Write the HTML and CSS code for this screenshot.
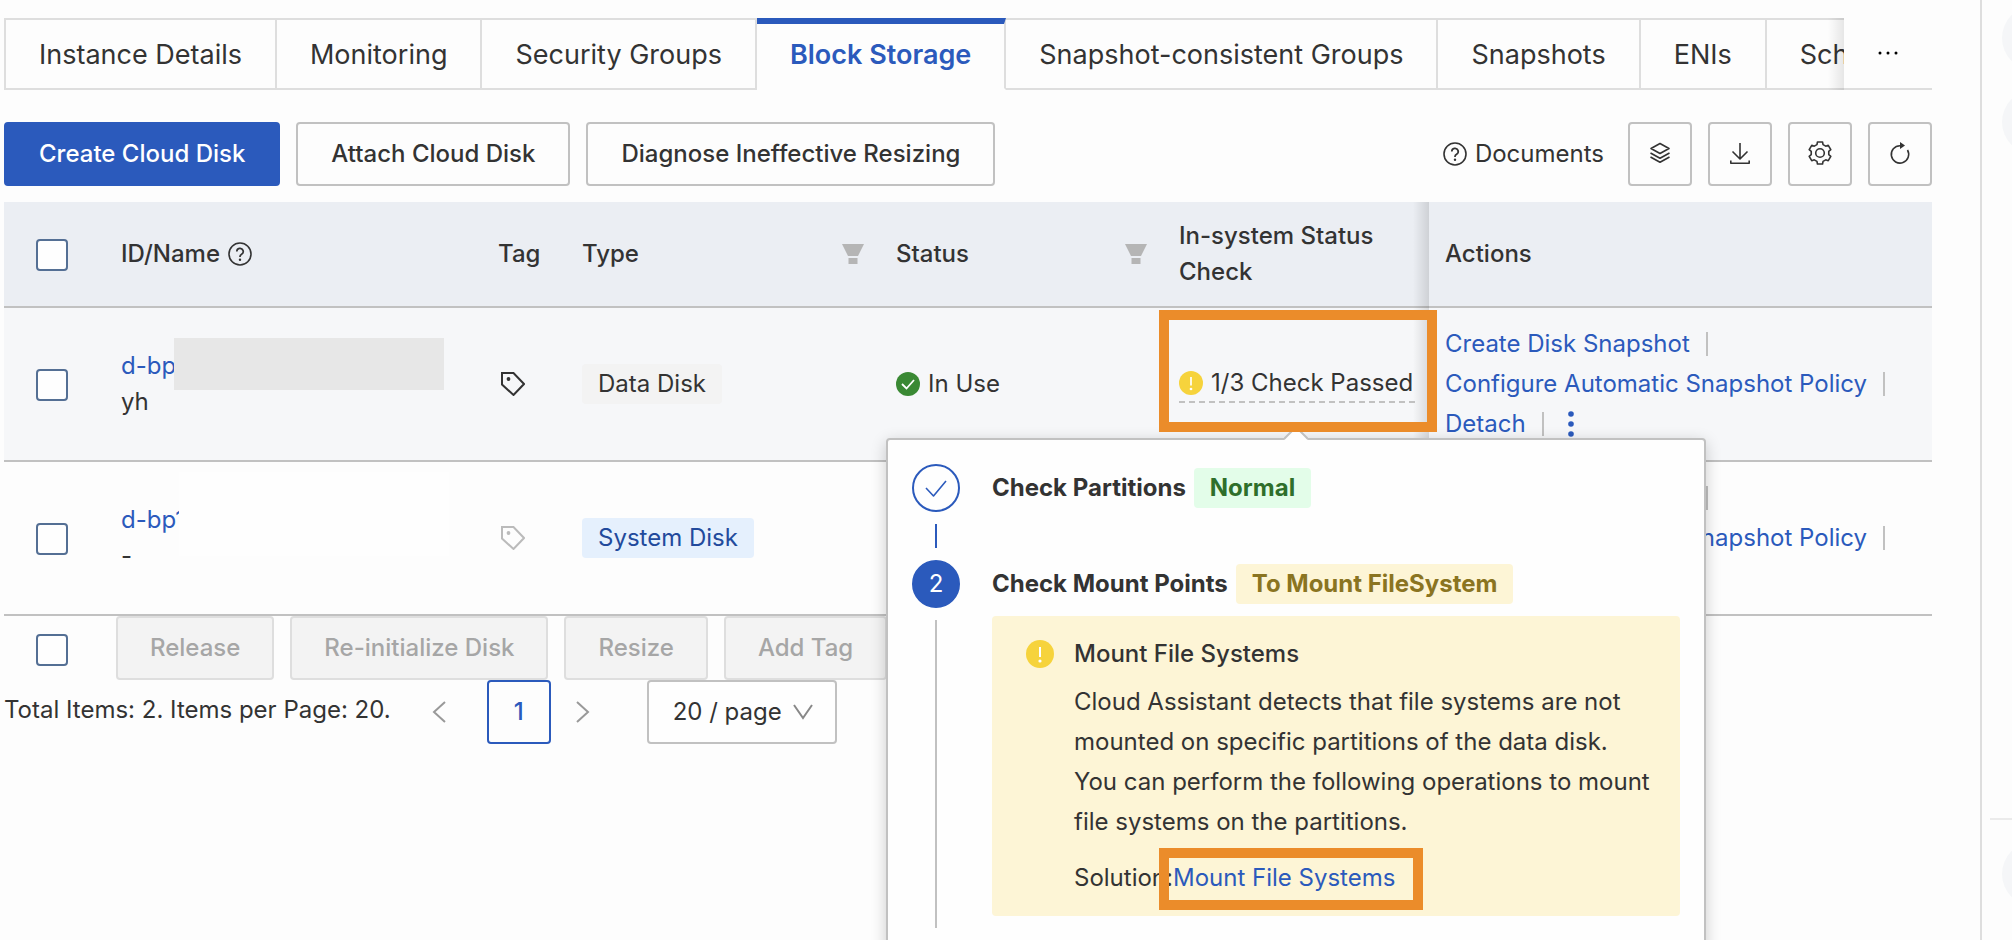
FILE: index.html
```html
<!DOCTYPE html>
<html lang="en">
<head>
<meta charset="utf-8">
<title>Block Storage</title>
<link rel="stylesheet" href="styles.css">
</head>
<body>
<svg class="sprite" aria-hidden="true">
  <symbol id="i-help" viewBox="0 0 24 24"><circle cx="12" cy="12" r="11" fill="none" stroke="currentColor" stroke-width="1.6"/><path d="M8.8 9.6a3.2 3.2 0 1 1 4.8 2.7c-1 .6-1.6 1.1-1.6 2.2v.5" fill="none" stroke="currentColor" stroke-width="1.7"/><circle cx="12" cy="17.8" r="1.2" fill="currentColor"/></symbol>
  <symbol id="i-tag" viewBox="0 0 24 24"><path d="M1 1h11.500L23 12 12.500 23 1 12.500z" fill="none" stroke="currentColor" stroke-width="2"/><circle cx="7.500" cy="7" r="1.900" fill="currentColor"/></symbol>
  <symbol id="i-funnel" viewBox="0 0 22 20"><path d="M0 0h22l-6 12H6z" fill="currentColor"/><path d="M6.500 14h9v6h-9z" fill="currentColor"/></symbol>
  <symbol id="i-warn" viewBox="0 0 28 28"><circle cx="14" cy="14" r="14" fill="#f6d33c"/><path d="M14 7v10" stroke="#fff" stroke-width="2"/><circle cx="14" cy="21" r="1.6" fill="#fff"/></symbol>
</svg>
<div class="page">
  <main class="content">
    <nav class="tabs">
      <div class="tab-list">
        <button class="tab">Instance Details</button>
        <button class="tab">Monitoring</button>
        <button class="tab">Security Groups</button>
        <button class="tab is-active">Block Storage</button>
        <button class="tab">Snapshot-consistent Groups</button>
        <button class="tab">Snapshots</button>
        <button class="tab">ENIs</button>
        <button class="tab">Sch</button>
      </div>
      <button class="tab-more" aria-label="More tabs"><svg width="20" height="4" viewBox="0 0 20 4"><circle cx="2" cy="2" r="1.5"/><circle cx="10" cy="2" r="1.5"/><circle cx="18" cy="2" r="1.5"/></svg></button>
    </nav>

    <div class="toolbar">
      <button class="btn btn-primary">Create Cloud Disk</button>
      <button class="btn">Attach Cloud Disk</button>
      <button class="btn">Diagnose Ineffective Resizing</button>
      <a class="docs" href="#"><svg class="ico"><use href="#i-help"/></svg>Documents</a>
      <button class="btn btn-icon" aria-label="Layers"><svg class="ico line thin" viewBox="0 0 24 24"><path d="M12 2.500l9 5-9 5-9-5z"/><path d="M2.500 12l9.500 5.300 9.500-5.300"/><path d="M2.500 16l9.500 5.300 9.500-5.300"/></svg></button>
      <button class="btn btn-icon" aria-label="Download"><svg class="ico line thin" viewBox="0 0 24 24"><path d="M12 2v15.500M4.500 10.500l7.500 7.500 7.500-7.500M2.800 19.500v2.700h18.400v-2.700"/></svg></button>
      <button class="btn btn-icon" aria-label="Settings"><svg class="ico line thin" viewBox="0 0 24 24"><path d="M9.460 1H14.540L15.040 3.640L17.720 5.180L20.260 4.290L22.810 8.700L20.760 10.450V13.550L22.810 15.300L20.260 19.710L17.720 18.820L15.040 20.360L14.540 23H9.460L8.960 20.360L6.280 18.820L3.740 19.710L1.190 15.300L3.240 13.550V10.450L1.190 8.700L3.740 4.290L6.280 5.180L8.960 3.640Z"/><circle cx="12" cy="12" r="4.300"/></svg></button>
      <button class="btn btn-icon" aria-label="Refresh"><svg class="ico line thin" viewBox="0 0 24 24"><path d="M19.500 9a8.700 8.700 0 1 1-7.500-4.300h1"/><path d="M12 1l5 3.500-5 3.500z" fill="currentColor" stroke="none"/></svg></button>
    </div>

    <table class="disks">
      <colgroup><col class="c-check"><col><col class="c-tag"><col class="c-type"><col class="c-status"><col class="c-check-status"><col class="c-actions"></colgroup>
      <thead>
        <tr>
          <th class="pick"><input type="checkbox" aria-label="Select all"></th>
          <th><span class="inline">ID/Name <svg class="ico"><use href="#i-help"/></svg></span></th>
          <th>Tag</th>
          <th><span class="filtered">Type <svg class="funnel"><use href="#i-funnel"/></svg></span></th>
          <th><span class="filtered">Status <svg class="funnel"><use href="#i-funnel"/></svg></span></th>
          <th>In-system Status Check</th>
          <th class="actions">Actions</th>
        </tr>
      </thead>
      <tbody>
        <tr class="is-hover">
          <td class="pick"><input type="checkbox" aria-label="Select disk yh"></td>
          <td><div class="disk-id"><a href="#">d-bp</a><span class="mask mask-grey"></span></div><div class="disk-name">yh</div></td>
          <td class="tag-cell"><svg class="ico"><use href="#i-tag"/></svg></td>
          <td><span class="badge">Data Disk</span></td>
          <td><span class="inline status"><svg class="ico" viewBox="0 0 24 24"><circle cx="12" cy="12" r="12" fill="#3a8934"/><path d="M6 12l4.500 4.500L18 8" fill="none" stroke="#fff" stroke-width="1.8"/></svg>In Use</span></td>
          <td>
            <div class="check-trigger">
              <span class="check-label"><svg class="ico"><use href="#i-warn"/></svg>1/3 Check Passed</span>
              <div class="popover">
                <svg class="arrow" viewBox="0 0 24 14"><path d="M0 14L12 1l12 13z" fill="#fefefe"/><path d="M0 13L12 1l12 12" fill="none" stroke="#c1c1c1" stroke-width="2"/></svg>
                <div class="step">
                  <div class="rail"><span class="node"><svg class="ico line thin" viewBox="0 0 24 24"><path d="M2 12l7.500 8L22 5"/></svg></span><span class="rail-line rail-done"></span></div>
                  <div class="step-title">Check Partitions <span class="badge ok">Normal</span></div>
                </div>
                <div class="step">
                  <div class="rail"><span class="node node-active">2</span><span class="rail-line"></span></div>
                  <div class="step-body">
                    <div class="step-title">Check Mount Points <span class="badge warn">To Mount FileSystem</span></div>
                    <div class="notice">
                      <svg class="notice-ico"><use href="#i-warn"/></svg>
                      <div>
                        <h3>Mount File Systems</h3>
                        <p>Cloud Assistant detects that file systems are not mounted on specific partitions of the data disk. You can perform the following operations to mount file systems on the partitions.</p>
                        <p class="solution">Solution:<a class="marked" href="#">Mount File Systems</a></p>
                      </div>
                    </div>
                  </div>
                </div>
              </div>
              <span class="highlight"></span>
            </div>
          </td>
          <td class="actions">
            <div><a href="#">Create Disk Snapshot</a><i class="sep"></i></div>
            <div><a href="#">Configure Automatic Snapshot Policy</a><i class="sep"></i></div>
            <div><a href="#">Detach</a><i class="sep"></i><button class="dots" aria-label="More actions"><svg width="6" height="26" viewBox="0 0 6 26"><circle cx="3" cy="3" r="2.8"/><circle cx="3" cy="13" r="2.8"/><circle cx="3" cy="23" r="2.8"/></svg></button></div>
          </td>
        </tr>
        <tr>
          <td class="pick"><input type="checkbox" aria-label="Select system disk"></td>
          <td><div class="disk-id"><a href="#">d-bp1</a><span class="mask mask-white"></span></div><div class="disk-name">-</div></td>
          <td class="tag-cell is-empty"><svg class="ico"><use href="#i-tag"/></svg></td>
          <td><span class="badge info">System Disk</span></td>
          <td></td>
          <td></td>
          <td class="actions">
            <div><a href="#">Create Disk Snapshot</a><i class="sep"></i></div>
            <div><a href="#">Configure Automatic Snapshot Policy</a><i class="sep"></i></div>
            <div>&nbsp;</div>
          </td>
        </tr>
      </tbody>
    </table>

    <div class="bulk">
      <input type="checkbox" aria-label="Select page">
      <button class="btn" disabled>Release</button>
      <button class="btn" disabled>Re-initialize Disk</button>
      <button class="btn" disabled>Resize</button>
      <button class="btn" disabled>Add Tag</button>
    </div>
    <div class="pager">
      <span class="total">Total Items: 2. Items per Page: 20.</span>
      <button class="pager-nav" aria-label="Previous page"><svg width="14" height="22" viewBox="0 0 14 22"><path d="M13 1L2 11l11 10"/></svg></button>
      <button class="btn pager-page">1</button>
      <button class="pager-nav" aria-label="Next page"><svg width="14" height="22" viewBox="0 0 14 22"><path d="M1 1l11 10L1 21"/></svg></button>
      <label class="size"><select aria-label="Items per page"><option>20 / page</option></select><svg width="20" height="16" viewBox="0 0 20 16"><path d="M1 1l9 13 9-13"/></svg></label>
    </div>
  </main>
  <aside class="rail-side">
    <div class="side-top"><span class="bubble"></span><span class="bubble"></span></div>
    <div class="side-bottom"><span class="bubble"></span></div>
  </aside>
</div>
</body>
</html>
```
FILE: styles.css
```css
* { box-sizing: border-box; }

body {
  margin: 0;
  background: #fdfdfd;
  color: #333;
  font: 400 24px/36px Inter, "Liberation Sans", sans-serif;
}

button, select { font: inherit; color: inherit; }
button { background: none; border: 0; padding: 0; }
a { color: #2b5abc; text-decoration: none; }

.sprite { position: absolute; width: 0; height: 0; }
.ico { width: 24px; height: 24px; flex: none; display: block; }
.line { fill: none; stroke: currentColor; stroke-width: 2; stroke-linejoin: round; }
.thin { stroke-width: 1.6; }

.page { display: flex; height: 100vh; overflow: hidden; }
.content { flex: 1; min-width: 0; padding: 18px 48px 0 4px; border-right: 2px solid #dedede; }

/* tabs */
.tabs { display: flex; border-bottom: 2px solid #dedede; }
.tab-list { flex: 1; min-width: 0; display: flex; overflow: hidden; position: relative; margin-bottom: -2px; }
.tab-list::after {
  content: ""; position: absolute; top: 0; right: 0; bottom: 0; width: 16px;
  background: linear-gradient(to right, transparent, rgba(0, 0, 0, .09));
}
.tab {
  flex: none; height: 72px; padding: 2px 33px 0; font-size: 27px; white-space: nowrap;
  border: 2px solid #dedede; border-left-width: 0;
}
.tab:first-child { border-left-width: 2px; }
.tab.is-active {
  color: #2b5abc; font-weight: 600;
  border-top: 6px solid #2b5abc; border-bottom-color: #fdfdfd; padding-top: 0; padding-bottom: 2px;
}
.tab-more { flex: none; width: 88px; height: 70px; display: flex; align-items: center; justify-content: center; }

/* toolbar */
.toolbar { display: flex; gap: 16px; align-items: center; padding: 32px 0 16px; }
.btn {
  height: 64px; padding: 0 33px; border: 2px solid #c1c1c1; border-radius: 4px;
  font-weight: 500; white-space: nowrap;
}
.btn-primary { background: #2b5abc; border-color: #2b5abc; color: #fff; }
.btn-icon { width: 64px; padding: 0 0 2px; display: flex; align-items: center; justify-content: center; }
.btn:disabled { padding: 0 32px; background: #f3f3f3; border-color: #dedede; color: #a6a6a6; }
.docs { margin-left: auto; margin-right: 8px; color: #333; display: flex; align-items: center; gap: 8px; }

/* table */
.disks { width: 100%; border-collapse: separate; border-spacing: 0; table-layout: fixed; }
.c-check { width: 101px; }
.c-tag { width: 84px; }
.c-type { width: 314px; }
.c-status { width: 283px; }
.c-check-status { width: 266px; }
.c-actions { width: 503px; }
th, td { text-align: left; font-weight: 400; padding: 16px; border-bottom: 2px solid #c1c1c1; vertical-align: middle; }
th { height: 106px; font-weight: 500; background: #ebeef3; }
.is-hover td { background: #f6f7f9; }
.pick { padding: 2px 32px 0; }
input[type="checkbox"] {
  appearance: none; display: block; flex: none; width: 32px; height: 32px; margin: 0;
  border: 2px solid #546f94; border-radius: 4px; background: #fefefe;
}
.inline { display: flex; align-items: center; gap: 8px; }
.filtered { display: flex; align-items: center; justify-content: space-between; }
.funnel { width: 22px; height: 20px; color: #b5b5b5; }
.disk-id { position: relative; }
.mask { position: absolute; width: 270px; }
.mask-grey { left: 53px; top: -10px; height: 52px; background: #e7e7e7; }
.mask-white { left: 58px; top: -30px; height: 84px; background: #fefefe; }
.tag-cell { padding-left: 19px; }
.is-empty { color: #bbb; }
.badge {
  display: inline-block; height: 40px; line-height: 40px; padding: 0 16px;
  border-radius: 4px; background: #f3f3f3; vertical-align: middle;
}
.info { background: #e5f0fd; color: #224a9c; }
.ok { background: #e3fde9; color: #2f6f2b; }
.warn { background: #fdf5d6; color: #8a7421; }

.actions { position: relative; line-height: 40px; }
.actions::before {
  content: ""; position: absolute; top: 0; bottom: -2px; right: 100%; width: 16px;
  background: linear-gradient(to right, transparent, rgba(0, 0, 0, .12));
}
.actions div { display: flex; align-items: center; }
.sep { width: 2px; height: 24px; margin: 0 16px; background: #c1c1c1; }
.dots { fill: #2b5abc; display: flex; margin-left: 8px; }

/* check popover */
.check-trigger { position: relative; z-index: 2; width: 236px; }
.check-label { display: flex; align-items: center; gap: 8px; white-space: nowrap; border-bottom: 2px dashed #c1c1c1; }
.highlight { position: absolute; left: -20px; right: -22px; top: -55px; height: 122px; border: 10px solid #eb8c2a; pointer-events: none; }
.popover {
  position: absolute; top: 73px; left: 50%; width: 820px; margin-left: -411px; padding: 24px;
  min-height: 560px; background: #fefefe; border: 2px solid #c1c1c1; border-radius: 4px;
  box-shadow: 0 4px 16px rgba(0, 0, 0, .2);
}
.arrow { position: absolute; left: 396px; top: -14px; width: 24px; height: 14px; }
.step { display: flex; gap: 32px; }
.rail { width: 48px; flex: none; display: flex; flex-direction: column; align-items: center; gap: 12px; padding-bottom: 12px; }
.node {
  width: 48px; height: 48px; flex: none; border: 2px solid #2b5abc; border-radius: 50%; color: #2b5abc;
  display: flex; align-items: center; justify-content: center;
}
.node-active { background: #2b5abc; color: #fff; }
.rail-line { width: 2px; flex: 1; min-height: 24px; background: #c1c1c1; }
.rail-done { background: #2b5abc; }
.step-body { flex: 1; padding-bottom: 24px; }
.step-title { height: 48px; font-weight: 700; display: flex; align-items: center; gap: 8px; white-space: nowrap; }
.notice { margin-top: 8px; padding: 18px 24px 18px 34px; background: #fdf5d6; border-radius: 4px; display: flex; gap: 20px; line-height: 40px; }
.notice-ico { width: 28px; height: 28px; flex: none; margin-top: 6px; }
.notice h3 { margin: 0 0 8px; font-size: 24px; font-weight: 500; }
.notice p { margin: 0; }
.notice .solution { margin-top: 16px; }
.marked { position: relative; }
.marked::after { content: ""; position: absolute; left: -14px; right: -28px; top: -15px; bottom: -18px; border: 10px solid #eb8c2a; }

/* footer */
.bulk { display: flex; align-items: center; gap: 16px; padding-left: 32px; }
.bulk input { margin: 4px 32px 0 0; }
.pager { display: flex; align-items: center; }
.total { margin-right: 36px; padding-bottom: 4px; }
.pager-nav { width: 24px; display: flex; justify-content: center; fill: none; stroke: #999; stroke-width: 2; }
.pager-page { width: 64px; padding: 0; margin: 0 20px 0 36px; border-color: #2b5abc; color: #2b5abc; }
.size { position: relative; margin-left: 52px; display: block; }
.size select { appearance: none; display: block; width: 190px; height: 64px; padding: 0 24px; border: 2px solid #c1c1c1; border-radius: 4px; background: #fefefe; }
.size svg { position: absolute; right: 24px; top: 24px; fill: none; stroke: #888; stroke-width: 2; pointer-events: none; }

/* right edge */
.rail-side { flex: none; width: 30px; display: flex; flex-direction: column; padding-left: 8px; overflow: hidden; }
.side-top { height: 820px; border-bottom: 2px solid #ebebeb; padding: 6px 0 0 12px; display: flex; flex-direction: column; gap: 20px; }
.side-bottom { padding: 22px 0 0 12px; }
.bubble { display: block; flex: none; width: 64px; height: 64px; border-radius: 50%; background: #f5f6f8; }
```
